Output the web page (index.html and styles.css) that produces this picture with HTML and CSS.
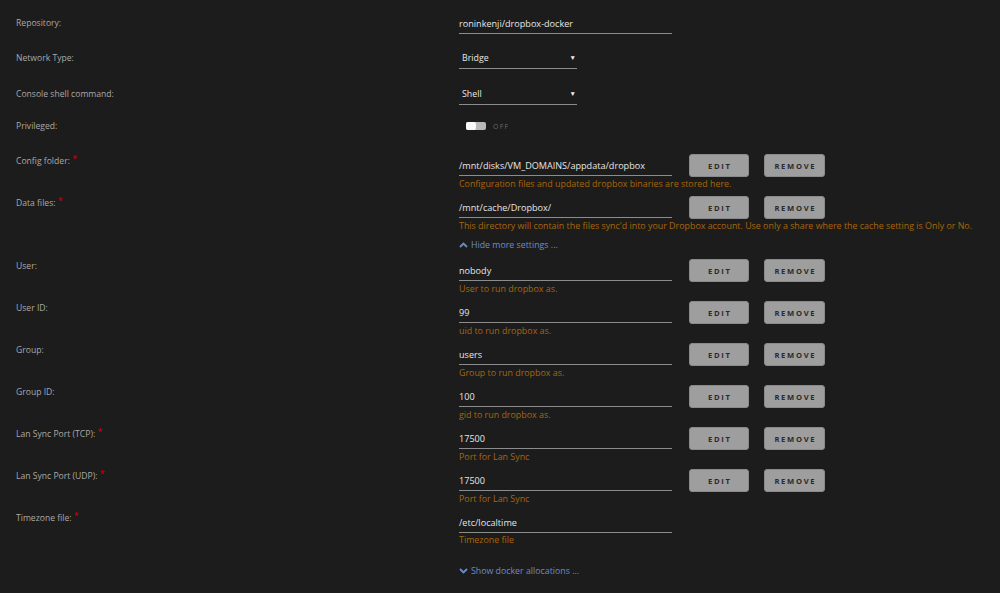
FILE: index.html
```html
<!DOCTYPE html>
<html>
<head>
<meta charset="utf-8">
<link rel="stylesheet" href="styles.css">
</head>
<body>
<div class="form">
  <div class="row mid r-repo">
    <div class="label">Repository:</div>
    <div class="field"><div class="input">roninkenji/dropbox-docker</div></div>
  </div>
  <div class="row mid r-net">
    <div class="label">Network Type:</div>
    <div class="field"><div class="select"><span>Bridge</span><span class="arrow">▼</span></div></div>
  </div>
  <div class="row mid r-shell">
    <div class="label">Console shell command:</div>
    <div class="field"><div class="select"><span>Shell</span><span class="arrow">▼</span></div></div>
  </div>
  <div class="row mid r-priv">
    <div class="label">Privileged:</div>
    <div class="field"><div class="toggle"><span class="track"><span class="knob"></span></span><span class="off">OFF</span></div></div>
  </div>

  <div class="row">
    <div class="label">Config folder: <span class="req">*</span></div>
    <div class="field">
      <div class="line"><div class="input">/mnt/disks/VM_DOMAINS/appdata/dropbox</div><button class="btn">EDIT</button><button class="btn wide">REMOVE</button></div>
      <div class="help">Configuration files and updated dropbox binaries are stored here.</div>
    </div>
  </div>
  <div class="row">
    <div class="label">Data files: <span class="req">*</span></div>
    <div class="field">
      <div class="line"><div class="input">/mnt/cache/Dropbox/</div><button class="btn">EDIT</button><button class="btn wide">REMOVE</button></div>
      <div class="help">This directory will contain the files sync'd into your Dropbox account. Use only a share where the cache setting is Only or No.</div>
    </div>
  </div>
  <div class="toggle-link hide"><svg width="9" height="6" viewBox="0 0 9 6"><path d="M1 5 L4.5 1.5 L8 5" fill="none" stroke="currentColor" stroke-width="1.8"/></svg> Hide more settings ...</div>

  <div class="row">
    <div class="label">User:</div>
    <div class="field">
      <div class="line"><div class="input">nobody</div><button class="btn">EDIT</button><button class="btn wide">REMOVE</button></div>
      <div class="help">User to run dropbox as.</div>
    </div>
  </div>
  <div class="row">
    <div class="label">User ID:</div>
    <div class="field">
      <div class="line"><div class="input">99</div><button class="btn">EDIT</button><button class="btn wide">REMOVE</button></div>
      <div class="help">uid to run dropbox as.</div>
    </div>
  </div>
  <div class="row">
    <div class="label">Group:</div>
    <div class="field">
      <div class="line"><div class="input">users</div><button class="btn">EDIT</button><button class="btn wide">REMOVE</button></div>
      <div class="help">Group to run dropbox as.</div>
    </div>
  </div>
  <div class="row">
    <div class="label">Group ID:</div>
    <div class="field">
      <div class="line"><div class="input">100</div><button class="btn">EDIT</button><button class="btn wide">REMOVE</button></div>
      <div class="help">gid to run dropbox as.</div>
    </div>
  </div>
  <div class="row">
    <div class="label">Lan Sync Port (TCP): <span class="req">*</span></div>
    <div class="field">
      <div class="line"><div class="input">17500</div><button class="btn">EDIT</button><button class="btn wide">REMOVE</button></div>
      <div class="help">Port for Lan Sync</div>
    </div>
  </div>
  <div class="row">
    <div class="label">Lan Sync Port (UDP): <span class="req">*</span></div>
    <div class="field">
      <div class="line"><div class="input">17500</div><button class="btn">EDIT</button><button class="btn wide">REMOVE</button></div>
      <div class="help">Port for Lan Sync</div>
    </div>
  </div>
  <div class="row">
    <div class="label">Timezone file: <span class="req">*</span></div>
    <div class="field">
      <div class="line"><div class="input">/etc/localtime</div></div>
      <div class="help">Timezone file</div>
    </div>
  </div>
  <div class="toggle-link show"><svg width="9" height="6" viewBox="0 0 9 6"><path d="M1 1 L4.5 4.5 L8 1" fill="none" stroke="currentColor" stroke-width="1.8"/></svg> Show docker allocations ...</div>
</div>
</body>
</html>
```

FILE: styles.css
```css
html, body {
  margin: 0;
  padding: 0;
  background: #1c1c1c;
  height: 100%;
  overflow: hidden;
}
body {
  font-family: "Open Sans", "Noto Sans", sans-serif;
  color: #a8a8a8;
}
.form {
  padding-top: 12px;
}
.row {
  display: flex;
  align-items: flex-start;
  margin-bottom: 6px;
}
.row.mid {
  align-items: center;
}
.r-repo { margin-bottom: 13px; }
.r-net { margin-bottom: 14px; }
.r-shell { margin-bottom: 10px; }
.r-priv { margin-bottom: 17px; }
.label {
  width: 459px;
  flex: none;
  padding-left: 16px;
  box-sizing: border-box;
  font-size: 8.6px;
  line-height: 12px;
  color: #a9a9a9;
}
.row:not(.mid) .label {
  padding-top: 1px;
}
.req {
  color: #d3000b;
  font-size: 9px;
  position: relative;
  top: -2px;
}
.field {
  display: flex;
  flex-direction: column;
}
.line {
  display: flex;
  align-items: flex-start;
}
.input {
  width: 213px;
  height: 19px;
  padding-top: 2px;
  border-bottom: 1px solid #8c8c8c;
  box-sizing: content-box;
  font-size: 9.1px;
  line-height: 20px;
  color: #e6e6e6;
}
.select {
  height: 21px;
  border-bottom: 1px solid #8c8c8c;
  display: flex;
  justify-content: space-between;
  align-items: center;
  padding-left: 3px;
  box-sizing: content-box;
  width: 115px;
  font-size: 8.8px;
  color: #e6e6e6;
}
.arrow {
  font-size: 6.5px;
  margin-right: 1px;
  color: #eee;
}
.btn {
  margin: 0 0 0 17px;
  width: 60px;
  height: 23px;
  padding: 0;
  border: 1px solid #8a8a8a;
  border-radius: 3px;
  background: #9e9e9e;
  color: #2a2a2a;
  font-family: "Open Sans", sans-serif;
  font-weight: 700;
  font-size: 7.6px;
  letter-spacing: 1.7px;
  text-indent: 1.7px;
}
.btn.wide {
  margin-left: 15px;
  width: 61px;
}
.help {
  font-size: 8.9px;
  line-height: 13px;
  color: #a8660a;
}
.toggle {
  display: flex;
  align-items: center;
  height: 22px;
  padding-left: 7px;
}
.track {
  width: 20px;
  height: 8px;
  border-radius: 2px;
  background: #b9b9b9;
  display: flex;
  align-items: center;
}
.knob {
  width: 10px;
  height: 8px;
  border-radius: 2px;
  background: #fafafa;
}
.off {
  margin-left: 7px;
  font-size: 7px;
  letter-spacing: 1.2px;
  color: #6a6a6a;
}
.toggle-link {
  margin-left: 459px;
  font-size: 8.8px;
  line-height: 14px;
  color: #6c8cc8;
  display: flex;
  align-items: center;
  gap: 3px;
}
.toggle-link.hide {
  margin-top: 1px;
  margin-bottom: 7px;
}
.toggle-link.show {
  margin-top: 18px;
}
```
